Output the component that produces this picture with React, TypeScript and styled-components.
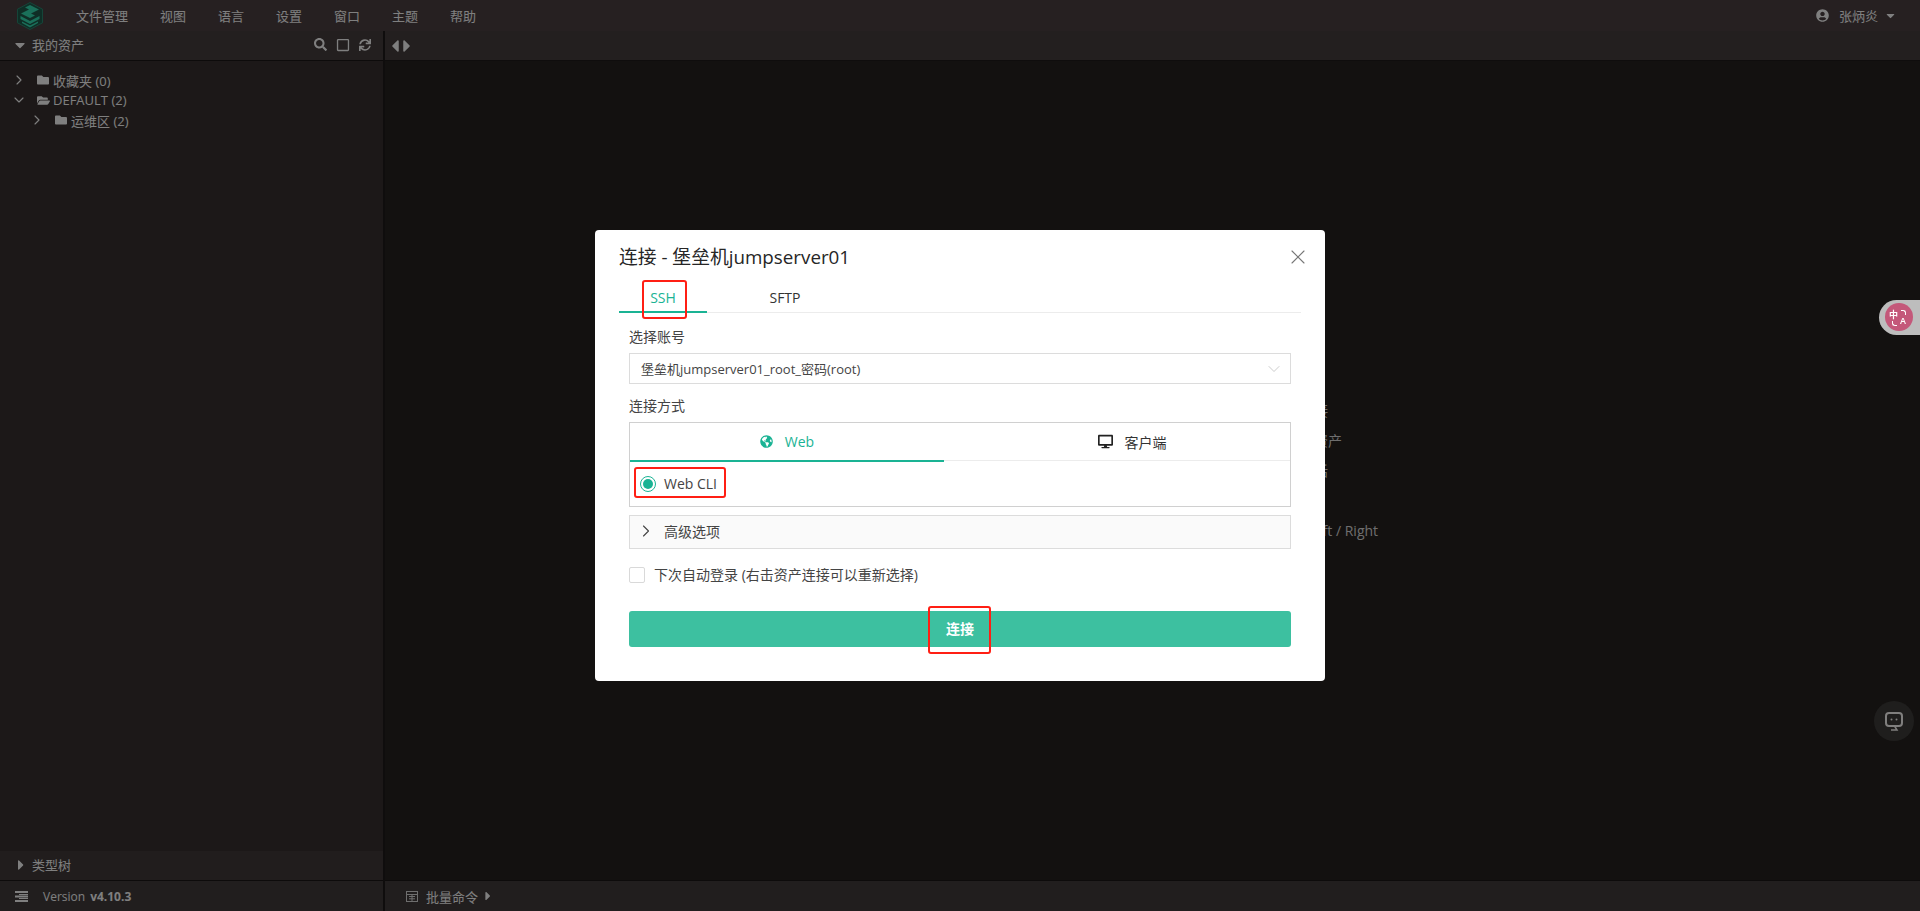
import React from 'react';
import styled, { createGlobalStyle } from 'styled-components';
import {
  FaCaretDown,
  FaCaretLeft,
  FaCaretRight,
  FaDesktop,
  FaFolder,
  FaFolderOpen,
  FaGlobeAmericas,
  FaRegSquare,
  FaSearch,
  FaSync,
  FaUserCircle,
} from 'react-icons/fa';
import { ChevronDown, ChevronRight, X } from 'lucide-react';

const GlobalStyle = createGlobalStyle`
  html, body {
    margin: 0;
    height: 100%;
    background: #262120;
    overflow: hidden;
    font-family: "Open Sans", "Noto Sans CJK SC", sans-serif;
    font-size: 13px;
  }
  * { box-sizing: border-box; }
`;

const Page = styled.div`
  display: flex;
  flex-direction: column;
  height: 911px;
  color: #fff;
`;

const TopBar = styled.div`
  display: flex;
  align-items: center;
  flex: 0 0 31px;
  padding: 0 23px 0 17px;
  background: #4c4143;
  color: #fff;
`;

const Menu = styled.div`
  display: flex;
  gap: 32px;
  margin-left: 33px;
`;

const UserBox = styled.div`
  display: flex;
  align-items: center;
  margin-left: auto;
  gap: 10px;
`;

const UserCaret = styled(FaCaretDown)`
  margin-left: -4px;
`;

const Workspace = styled.div`
  display: flex;
  flex: 1;
  min-height: 0;
`;

const Sidebar = styled.aside`
  display: flex;
  flex-direction: column;
  flex: 0 0 385px;
  background: #383131;
  border-right: 2px solid #1e1a1a;
`;

const SidebarHeader = styled.div`
  display: flex;
  align-items: center;
  flex: 0 0 30px;
  padding: 0 12px 2px 12px;
  gap: 4px;
  background: #463e3e;
  border-bottom: 1px solid #1a1616;
`;

const HeaderTools = styled.div`
  display: flex;
  align-items: center;
  gap: 9px;
  margin-left: auto;
`;

const Tree = styled.div`
  flex: 1;
  padding-top: 9px;
`;

const TreeRow = styled.div<{ $level: number }>`
  display: flex;
  align-items: center;
  height: 20px;
  padding-left: ${(p) => 14 + p.$level * 18}px;
  color: #fff;
`;

const TreeChevron = styled.span`
  display: flex;
  justify-content: center;
  width: 10px;
  margin-right: 13px;
  & > svg {
    flex-shrink: 0;
  }
`;

const OpenFolder = styled(FaFolderOpen)`
  margin-right: -1px;
`;

const TreeLabel = styled.span`
  margin-left: 4px;
`;

const TypeTree = styled.div`
  display: flex;
  align-items: center;
  flex: 0 0 29px;
  padding: 0 0 2px 13px;
  gap: 3px;
  background: #423b3b;
`;

const FooterBar = styled.div`
  display: flex;
  align-items: center;
  flex: 0 0 31px;
  background: #423c3c;
  border-top: 1px solid #1a1616;
`;

const VersionBar = styled(FooterBar)`
  padding-left: 15px;
  gap: 15px;
  font-size: 12px;
`;

const BatchBar = styled(FooterBar)`
  padding-left: 21px;
  gap: 8px;
`;

const BatchCaret = styled(FaCaretRight)`
  margin-left: -5px;
`;

const StrongVersion = styled.b`
  margin-left: 5px;
`;

const Main = styled.main`
  display: flex;
  flex-direction: column;
  flex: 1;
  min-width: 0;
  background: #262220;
`;

const TabArrows = styled.div`
  display: flex;
  align-items: center;
  flex: 0 0 30px;
  background: #463e3e;
  border-bottom: 1px solid #1e1a1a;
`;

const ArrowRight = styled(FaCaretRight)`
  margin-left: -8px;
`;

const Welcome = styled.div`
  display: flex;
  flex: 1;
  flex-direction: column;
  justify-content: center;
  padding-left: 845px;
  color: #ddd;
  font-size: 14px;
`;

const WelcomeRow = styled.div`
  height: 30px;
  line-height: 30px;
  white-space: nowrap;
`;

const Overlay = styled.div`
  position: fixed;
  inset: 0;
  display: flex;
  align-items: center;
  justify-content: center;
  background: rgba(0, 0, 0, 0.5);
`;

const Modal = styled.div`
  position: relative;
  width: 730px;
  padding: 15px 24px 34px;
  background: #fff;
  border-radius: 4px;
  color: #333;
  font-size: 14px;
`;

const ModalTitle = styled.div`
  font-size: 18.8px;
  line-height: 24px;
  color: #262626;
`;

const CloseButton = styled.span`
  position: absolute;
  top: 15px;
  right: 15px;
  display: flex;
  color: #777;
`;

const TabNav = styled.div`
  display: flex;
  height: 30px;
  margin-top: 14px;
  border-bottom: 1px solid #ececec;
`;

const TabItem = styled.div<{ $active?: boolean }>`
  position: relative;
  width: 88px;
  height: 30px;
  line-height: 30px;
  text-align: center;
  color: ${(p) => (p.$active ? '#1ab394' : '#333')};
  border-bottom: 2px solid ${(p) => (p.$active ? '#1ab394' : 'transparent')};
  & + & {
    margin-left: 34px;
  }
`;

const RedMark = styled.span`
  position: absolute;
  border: 2px solid #ff1f14;
  border-radius: 3px;
  pointer-events: none;
`;

const SshMark = styled(RedMark)`
  top: -3px;
  bottom: -8px;
  left: 23px;
  right: 20px;
`;

const CliMark = styled(RedMark)`
  top: -7px;
  bottom: -4px;
  left: -6px;
  right: -9px;
`;

const ConnectMark = styled(RedMark)`
  top: -13px;
  bottom: -15px;
  left: -18px;
  right: -17px;
`;

const Form = styled.div`
  padding: 15px 10px 0;
`;

const FieldLabel = styled.div`
  height: 20px;
  padding-bottom: 2px;
  line-height: 18px;
  margin-bottom: 5px;
  color: #444;
`;

const SelectBox = styled.div`
  display: flex;
  align-items: center;
  justify-content: space-between;
  height: 31px;
  margin-bottom: 13px;
  padding: 0 6px 0 11px;
  font-size: 13px;
  border: 1px solid #dcdcdc;
  color: #444;
`;

const MethodBox = styled.div`
  height: 85px;
  border: 1px solid #d0d0d0;
`;

const MethodTabs = styled.div`
  display: flex;
  height: 38px;
  border-bottom: 1px solid #ececec;
`;

const MethodTab = styled.div<{ $active?: boolean; $offset?: number }>`
  display: flex;
  align-items: center;
  justify-content: center;
  gap: 12px;
  height: 39px;
  padding-left: ${(p) => p.$offset ?? 0}px;
  width: ${(p) => (p.$active ? '314px' : '346px')};
  color: ${(p) => (p.$active ? '#1ab394' : '#333')};
  border-bottom: 2px solid ${(p) => (p.$active ? '#1ab394' : 'transparent')};
`;

const RadioRow = styled.div`
  display: flex;
  align-items: center;
  height: 45px;
  padding-left: 10px;
`;

const RadioLabel = styled.label`
  position: relative;
  display: flex;
  align-items: center;
  gap: 8px;
  line-height: 20px;
  color: #444;
`;

const RadioDot = styled.span`
  display: flex;
  align-items: center;
  justify-content: center;
  width: 16px;
  height: 16px;
  border: 1px solid #1ab394;
  border-radius: 50%;
  &::after {
    content: '';
    width: 10px;
    height: 10px;
    border-radius: 50%;
    background: #1ab394;
  }
`;

const Advanced = styled.div`
  display: flex;
  align-items: center;
  height: 34px;
  margin-top: 8px;
  padding: 0 0 2px 6px;
  gap: 8px;
  background: #fafafa;
  border: 1px solid #dcdcdc;
  color: #444;
`;

const AutoLogin = styled.label`
  display: flex;
  align-items: center;
  height: 16px;
  margin-top: 18px;
  gap: 9px;
  color: #444;
`;

const AutoLoginText = styled.span`
  margin-top: -2px;
`;

const CheckBox = styled.span`
  width: 16px;
  height: 16px;
  background: #fff;
  border: 1px solid #d9d9d9;
  border-radius: 2px;
`;

const ConnectButton = styled.div`
  display: flex;
  align-items: center;
  justify-content: center;
  height: 36px;
  margin-top: 28px;
  background: #3dc0a0;
  border-radius: 3px;
  color: #fff;
  font-weight: 600;
`;

const ConnectText = styled.span`
  position: relative;
  line-height: 20px;
`;

const TranslateTab = styled.div`
  position: fixed;
  top: 300px;
  right: 0;
  width: 41px;
  height: 35px;
  padding: 3px 0 0 6px;
  background: #bdbdbd;
  border-radius: 18px 0 0 18px;
`;

const TranslateDot = styled.div`
  position: relative;
  display: grid;
  grid-template-columns: 11px 9px;
  width: 28px;
  height: 28px;
  padding: 7px 0 0 4px;
  border-radius: 50%;
  background: #c4587a;
  color: #fff;
  font-size: 9px;
  line-height: 10px;
  font-weight: 600;
  &::before {
    content: '';
    position: absolute;
    top: 7px;
    right: 7px;
    width: 4px;
    height: 4px;
    border: 1px solid #fff;
    border-left: 0;
    border-bottom: 0;
    border-top-right-radius: 3px;
  }
  &::after {
    content: '';
    position: absolute;
    bottom: 5px;
    left: 7px;
    width: 4px;
    height: 4px;
    border: 1px solid #fff;
    border-right: 0;
    border-top: 0;
    border-bottom-left-radius: 3px;
  }
`;

const TranslateLower = styled.span`
  grid-column: 2;
  margin-top: 6px;
`;

const ChatButton = styled.div`
  position: fixed;
  top: 701px;
  right: 6px;
  display: flex;
  align-items: center;
  justify-content: center;
  width: 40px;
  height: 40px;
  border-radius: 50%;
  background: #1f1e1d;
`;

const Logo = () => (
  <svg width="26" height="28" viewBox="0 0 26 28">
    <path d="M13 0.5 25.5 7.2V20.8L13 27.5 0.5 20.8V7.2Z" fill="#1f5c4c" stroke="#2b8a72" />
    <path d="M13 3 22 7.5 14 11.5 18 13.5 13 16 4 11.5 12 7.5 8 5.5Z" fill="#34e0b4" />
    <path d="M3.5 14 13 19 22.5 14V17L13 22 3.5 17Z" fill="#34e0b4" />
    <path d="M5 19.5 13 23.5 21 19.5V21L13 25.5 5 21Z" fill="#34e0b4" />
  </svg>
);

const OutdentIcon = () => (
  <svg width="13" height="11" viewBox="0 0 13 11" fill="#fff">
    <rect x="0" y="0" width="13" height="2" />
    <rect x="4" y="3" width="9" height="1" />
    <rect x="0" y="4.5" width="13" height="2" />
    <rect x="4" y="7" width="9" height="1" />
    <rect x="0" y="9" width="13" height="2" />
  </svg>
);

const BatchIcon = () => (
  <svg width="12" height="11" viewBox="0 0 12 11" fill="none" stroke="#ddd">
    <rect x="0.5" y="0.5" width="11" height="10" />
    <path d="M0.5 3.5H11.5M3 5.5H9M3 7.8H9M6 3.5V10.5" />
  </svg>
);

const ChatIcon = () => (
  <svg width="18" height="19" viewBox="0 0 18 19" fill="none" stroke="#807f7e" strokeWidth="2">
    <rect x="1" y="1" width="16" height="13" rx="3" />
    <path d="M6 18H12L9.5 14" strokeWidth="1.5" />
    <circle cx="6.5" cy="7.5" r="1" fill="#807f7e" stroke="none" />
    <circle cx="11.5" cy="7.5" r="1" fill="#807f7e" stroke="none" />
  </svg>
);

const menuItems = ['文件管理', '视图', '语言', '设置', '窗口', '主题', '帮助'];

const shortcuts = [
  '断开当前的连接',
  '切换到上一个资产',
  '复制当前的会话',
  '切换到下一个',
  'Alt + Shift + Left / Right',
];

export default function App() {
  return (
    <>
      <GlobalStyle />
      <Page>
        <TopBar>
          <Logo />
          <Menu>
            {menuItems.map((item) => (
              <span key={item}>{item}</span>
            ))}
          </Menu>
          <UserBox>
            <FaUserCircle size={13} />
            <span>张炳炎</span>
            <UserCaret size={13} />
          </UserBox>
        </TopBar>

        <Workspace>
          <Sidebar>
            <SidebarHeader>
              <FaCaretDown size={16} />
              <span>我的资产</span>
              <HeaderTools>
                <FaSearch size={13} />
                <FaRegSquare size={14} />
                <FaSync size={12} />
              </HeaderTools>
            </SidebarHeader>
            <Tree>
              <TreeRow $level={0}>
                <TreeChevron><ChevronRight size={16} strokeWidth={1.7} /></TreeChevron>
                <FaFolder size={12} />
                <TreeLabel>收藏夹 (0)</TreeLabel>
              </TreeRow>
              <TreeRow $level={0}>
                <TreeChevron><ChevronDown size={16} strokeWidth={1.7} /></TreeChevron>
                <OpenFolder size={13} />
                <TreeLabel>DEFAULT (2)</TreeLabel>
              </TreeRow>
              <TreeRow $level={1}>
                <TreeChevron><ChevronRight size={16} strokeWidth={1.7} /></TreeChevron>
                <FaFolder size={12} />
                <TreeLabel>运维区 (2)</TreeLabel>
              </TreeRow>
            </Tree>
            <TypeTree>
              <FaCaretRight size={16} />
              <span>类型树</span>
            </TypeTree>
            <VersionBar>
              <OutdentIcon />
              <span>
                Version<StrongVersion>v4.10.3</StrongVersion>
              </span>
            </VersionBar>
          </Sidebar>

          <Main>
            <TabArrows>
              <FaCaretLeft size={20} />
              <ArrowRight size={20} />
            </TabArrows>
            <Welcome>
              {shortcuts.map((text) => (
                <WelcomeRow key={text}>{text}</WelcomeRow>
              ))}
            </Welcome>
            <BatchBar>
              <BatchIcon />
              <span>批量命令</span>
              <BatchCaret size={14} />
            </BatchBar>
          </Main>
        </Workspace>
      </Page>

      <Overlay>
        <Modal>
          <ModalTitle>连接 - 堡垒机jumpserver01</ModalTitle>
          <CloseButton><X size={24} strokeWidth={1.1} /></CloseButton>
          <TabNav>
            <TabItem $active>
              SSH
              <SshMark />
            </TabItem>
            <TabItem>SFTP</TabItem>
          </TabNav>
          <Form>
            <FieldLabel>选择账号</FieldLabel>
            <SelectBox>
              <span>堡垒机jumpserver01_root_密码(root)</span>
              <ChevronDown size={20} strokeWidth={0.9} color="#bbb" />
            </SelectBox>
            <FieldLabel>连接方式</FieldLabel>
            <MethodBox>
              <MethodTabs>
                <MethodTab $active>
                  <FaGlobeAmericas size={13} />
                  Web
                </MethodTab>
                <MethodTab $offset={30}>
                  <FaDesktop size={15} color="#222" />
                  客户端
                </MethodTab>
              </MethodTabs>
              <RadioRow>
                <RadioLabel>
                  <RadioDot />
                  Web CLI
                  <CliMark />
                </RadioLabel>
              </RadioRow>
            </MethodBox>
            <Advanced>
              <ChevronRight size={20} strokeWidth={1.3} />
              高级选项
            </Advanced>
            <AutoLogin>
              <CheckBox />
              <AutoLoginText>下次自动登录 (右击资产连接可以重新选择)</AutoLoginText>
            </AutoLogin>
            <ConnectButton>
              <ConnectText>
                连接
                <ConnectMark />
              </ConnectText>
            </ConnectButton>
          </Form>
        </Modal>
      </Overlay>

      <TranslateTab>
        <TranslateDot>
          <span>中</span>
          <TranslateLower>A</TranslateLower>
        </TranslateDot>
      </TranslateTab>
      <ChatButton>
        <ChatIcon />
      </ChatButton>
    </>
  );
}
